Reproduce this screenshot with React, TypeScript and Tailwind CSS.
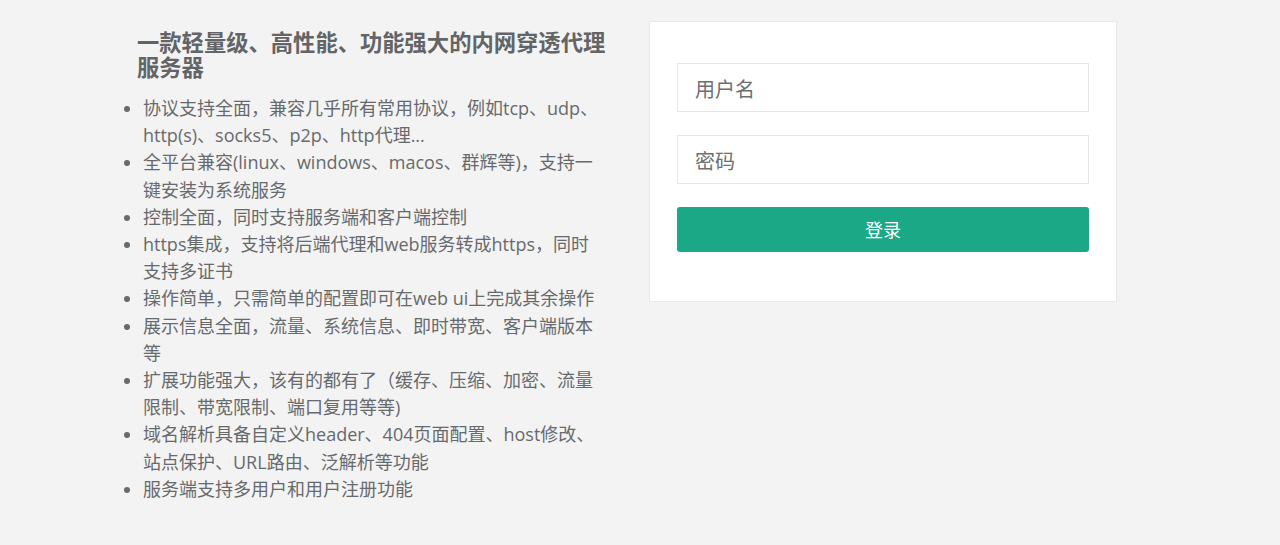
const FEATURES = [
  "协议支持全面，兼容几乎所有常用协议，例如tcp、udp、http(s)、socks5、p2p、http代理...",
  "全平台兼容(linux、windows、macos、群辉等)，支持一键安装为系统服务",
  "控制全面，同时支持服务端和客户端控制",
  "https集成，支持将后端代理和web服务转成https，同时支持多证书",
  "操作简单，只需简单的配置即可在web ui上完成其余操作",
  "展示信息全面，流量、系统信息、即时带宽、客户端版本等",
  "扩展功能强大，该有的都有了（缓存、压缩、加密、流量限制、带宽限制、端口复用等等)",
  "域名解析具备自定义header、404页面配置、host修改、站点保护、URL路由、泛解析等功能",
  "服务端支持多用户和用户注册功能",
];

const FONT = "font-['Open_Sans','Noto_Sans_CJK_SC',sans-serif]";

export default function App() {
  return (
    <div className={`min-h-[545px] w-full bg-[#f3f3f4] text-[#676a6c] ${FONT}`}>
      <div className="flex items-start pl-[123px] pt-[21px]">
        <div className="w-[490px] pt-[9px]">
          <h2 className="pl-[14px] text-[22.3px] font-bold leading-[25px] text-[#626466]">
            一款轻量级、高性能、功能强大的内网穿透代理服务器
          </h2>
          <ul className="mt-[15px] w-[480px] list-disc pl-[20px] text-[18px] leading-[27.2px] marker:text-[#676a6c]">
            {FEATURES.map((f) => (
              <li key={f}>{f}</li>
            ))}
          </ul>
        </div>

        <div className="ml-[36px] w-[468px] border border-[#e7eaec] bg-white px-[27px] pb-[49px] pt-[41px]">
          <form className="flex flex-col gap-[23px]" onSubmit={(e) => e.preventDefault()}>
            <input
              type="text"
              placeholder="用户名"
              className="h-[49px] w-full border border-[#e5e6e7] bg-white px-[17px] pt-[3px] text-[20px] outline-none placeholder:text-[#6d7072]"
            />
            <input
              type="password"
              placeholder="密码"
              className="h-[49px] w-full border border-[#e5e6e7] bg-white px-[17px] pt-[3px] text-[20px] outline-none placeholder:text-[#6d7072]"
            />
            <button
              type="submit"
              className="h-[45px] w-full rounded-[3px] bg-[#1aa887] pt-[1px] text-[18px] text-white"
            >
              登录
            </button>
          </form>
        </div>
      </div>
    </div>
  );
}
